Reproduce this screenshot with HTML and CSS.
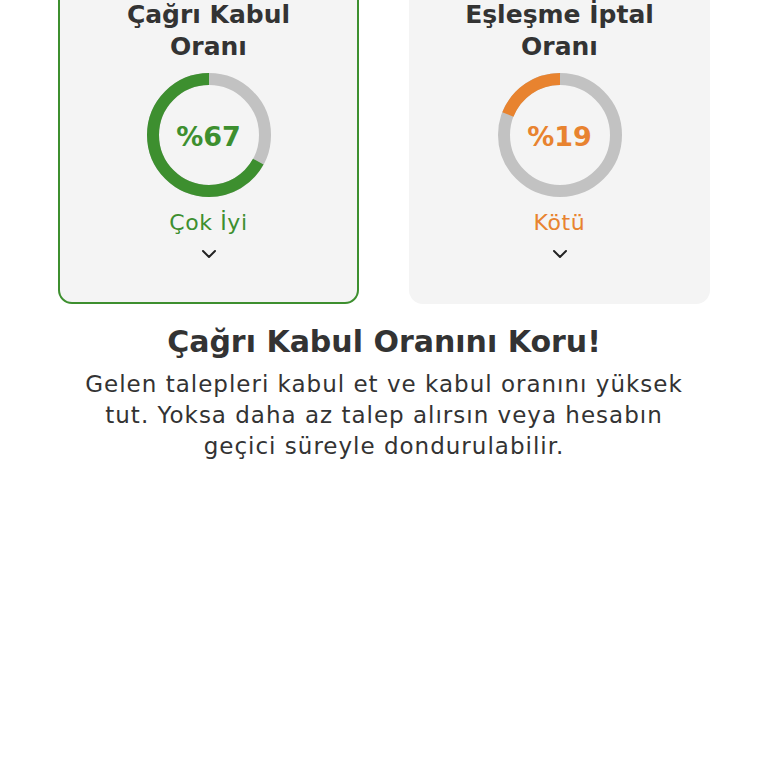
FILE: index.html
```html
<!DOCTYPE html>
<html lang="tr">
<head>
<meta charset="utf-8">
<link rel="stylesheet" href="styles.css">
</head>
<body>
<main class="page">
  <section class="cards">
    <div class="card card-active">
      <h2 class="card-title">Çağrı Kabul<br>Oranı</h2>
      <div class="ring">
        <svg viewBox="0 0 124 124" width="124" height="124">
          <circle cx="62" cy="62" r="56" fill="none" stroke="#c2c2c2" stroke-width="12"/>
          <circle cx="62" cy="62" r="56" fill="none" stroke="#3d8f2f" stroke-width="12" stroke-dasharray="235.7 351.9" transform="translate(124 0) scale(-1 1) rotate(-90 62 62)"/>
        </svg>
        <span class="ring-value green">%67</span>
      </div>
      <div class="status green">Çok İyi</div>
      <svg class="chevron" viewBox="0 0 16 10" width="16" height="10"><path d="M2 2 L8 8 L14 2" fill="none" stroke="#222" stroke-width="2" stroke-linecap="round" stroke-linejoin="round"/></svg>
    </div>
    <div class="card">
      <h2 class="card-title">Eşleşme İptal<br>Oranı</h2>
      <div class="ring">
        <svg viewBox="0 0 124 124" width="124" height="124">
          <circle cx="62" cy="62" r="56" fill="none" stroke="#c2c2c2" stroke-width="12"/>
          <circle cx="62" cy="62" r="56" fill="none" stroke="#e8832f" stroke-width="12" stroke-dasharray="66.9 351.9" transform="translate(124 0) scale(-1 1) rotate(-90 62 62)"/>
        </svg>
        <span class="ring-value orange">%19</span>
      </div>
      <div class="status orange">Kötü</div>
      <svg class="chevron" viewBox="0 0 16 10" width="16" height="10"><path d="M2 2 L8 8 L14 2" fill="none" stroke="#222" stroke-width="2" stroke-linecap="round" stroke-linejoin="round"/></svg>
    </div>
  </section>
  <h1 class="headline">Çağrı Kabul Oranını Koru!</h1>
  <p class="desc">Gelen talepleri kabul et ve kabul oranını yüksek tut. Yoksa daha az talep alırsın veya hesabın geçici süreyle dondurulabilir.</p>
</main>
</body>
</html>
```
FILE: styles.css
```css
* { box-sizing: border-box; }
html, body { margin: 0; padding: 0; background: #fff; }
body { font-family: "DejaVu Sans", sans-serif; color: #333; }
.page { width: 768px; padding: 0 58px; margin-top: -28px; }
.cards { display: grid; grid-template-columns: 301px 301px; gap: 50px; }
.card {
  background: #f4f4f4;
  border-radius: 14px;
  border: 2px solid transparent;
  display: flex; flex-direction: column; align-items: center;
  padding: 25px 10px 43px;
}
.card-active { border-color: #3d8f2f; }
.card-title { margin: 0; font-size: 25px; line-height: 32px; font-weight: 700; text-align: center; color: #333; }
.ring { position: relative; width: 124px; height: 124px; margin-top: 10px; }
.ring svg { display: block; }
.ring-value { position: absolute; inset: 0; display: flex; align-items: center; justify-content: center; font-size: 27px; font-weight: 700; padding-top: 2px; }
.green { color: #3d8f2f; }
.orange { color: #e8832f; }
.status { font-size: 22px; line-height: 28px; margin-top: 12px; letter-spacing: 0.6px; }
.chevron { margin-top: 12px; display: block; }
.headline { margin: 18px 0 0; text-align: center; font-size: 30px; line-height: 40px; font-weight: 700; color: #333; }
.desc { margin: 7px 0 0; text-align: center; font-size: 23px; line-height: 31px; color: #333; padding: 0 14px; letter-spacing: 1px; }
```
